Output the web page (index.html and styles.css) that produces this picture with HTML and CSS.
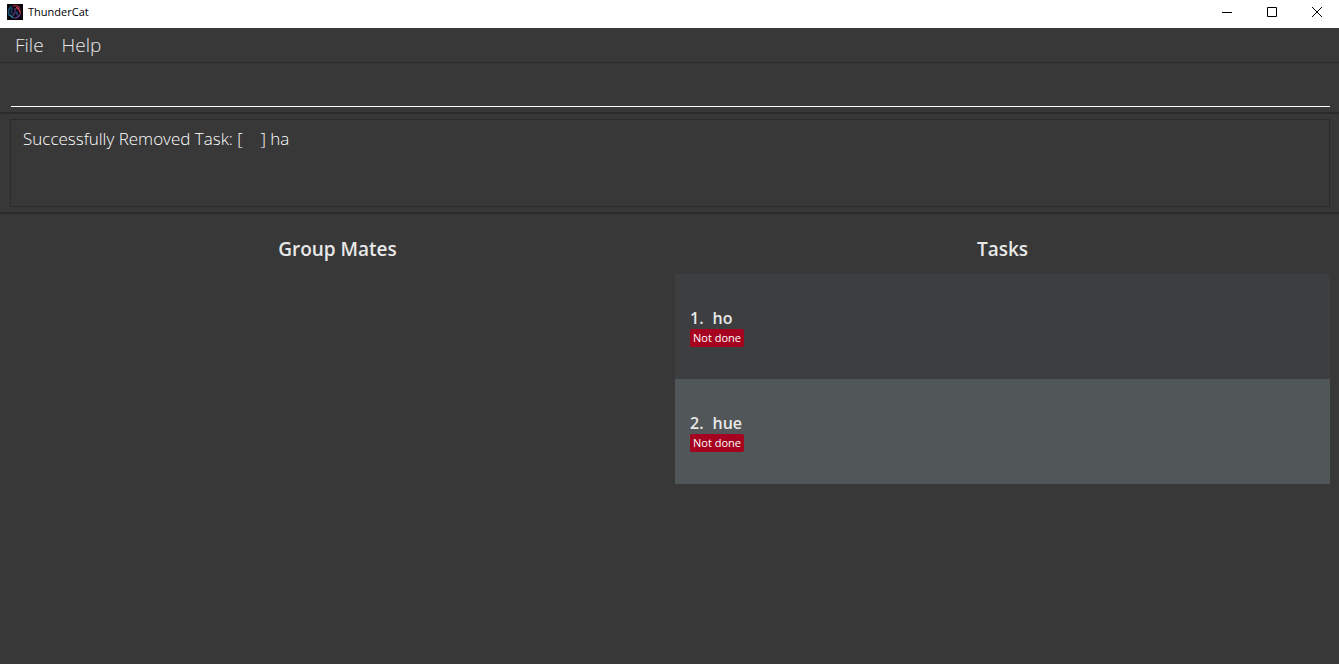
FILE: index.html
```html
<!DOCTYPE html>
<html lang="en">
<head>
<meta charset="utf-8">
<title>ThunderCat</title>
<link rel="stylesheet" href="styles.css">
</head>
<body>
<header class="titlebar">
  <svg class="logo" viewBox="0 0 16 16" width="16" height="16" aria-hidden="true">
    <rect width="16" height="16" fill="#08060c"/>
    <g fill="none">
      <path d="M4.500 2.500C1.500 5 1 8.500 2.500 11.500" stroke="#17506c" stroke-width="1.800"/>
      <path d="M5.500 4C4 6 4 8 5.500 10" stroke="#203d68" stroke-width="1.500"/>
      <path d="M2.500 11l4 3" stroke="#2392b8" stroke-width="1.300"/>
      <path d="M6 2C9 1 12 2 13 4.500" stroke="#842038" stroke-width="1.500"/>
      <path d="M9 3.500c2 .5 4 3 4.500 6" stroke="#c23b58" stroke-width="1.400"/>
      <path d="M8 4v5l-2.500 3" stroke="#4c3270" stroke-width="1.500"/>
      <path d="M13 10C12 13 9.500 14 7.500 14" stroke="#5d387f" stroke-width="1.600"/>
      <path d="M9.500 7.500l1 4" stroke="#2b4777" stroke-width="1.500"/>
    </g>
  </svg>
  <h1 class="app-name">ThunderCat</h1>
  <div class="window-controls">
    <button class="window-button" type="button" aria-label="Minimize"><svg viewBox="0 0 10 10" width="10" height="10"><path d="M0 5.500H10" stroke="#000" fill="none"/></svg></button>
    <button class="window-button" type="button" aria-label="Maximize"><svg viewBox="0 0 10 10" width="10" height="10"><path d="M.5 .5H9.500V9.500H.5Z" stroke="#000" fill="none"/></svg></button>
    <button class="window-button" type="button" aria-label="Close"><svg viewBox="0 0 10 10" width="10" height="10"><path d="M0 0L10 10M10 0L0 10" stroke="#000" fill="none"/></svg></button>
  </div>
</header>
<nav class="menubar" aria-label="Main menu">
  <button class="menu" type="button">File</button>
  <button class="menu" type="button">Help</button>
</nav>
<form class="command-pane">
  <input class="command" type="text" aria-label="Command" autocomplete="off">
</form>
<section class="result-pane" aria-label="Result">
  <output class="result">Successfully Removed Task: [    ] ha</output>
</section>
<main class="lists">
  <section class="column">
    <h2 class="heading">Group Mates</h2>
  </section>
  <section class="column">
    <h2 class="heading">Tasks</h2>
    <ol class="tasks">
      <li class="task">
        <div class="task-title"><span>1.</span><span>ho</span></div>
        <span class="status">Not done</span>
      </li>
      <li class="task">
        <div class="task-title"><span>2.</span><span>hue</span></div>
        <span class="status">Not done</span>
      </li>
    </ol>
  </section>
</main>
</body>
</html>
```
FILE: styles.css
```css
* {
  box-sizing: border-box;
}

body {
  margin: 0;
  min-height: 100vh;
  background: #383838;
  color: #e8e8e8;
  font-family: "Open Sans", sans-serif;
}

button {
  border: 0;
  padding: 0;
  background: none;
  color: inherit;
  font: inherit;
}

.titlebar {
  display: flex;
  align-items: center;
  height: 28px;
  padding: 0 0 4px 7px;
  background: #fff;
  color: #000;
}

.logo {
  margin-right: 5px;
}

.app-name {
  margin: 0;
  font: 400 11px/16px "Open Sans", sans-serif;
}

.window-controls {
  display: flex;
  margin-left: auto;
}

.window-button {
  display: flex;
  align-items: center;
  justify-content: center;
  width: 45px;
  height: 24px;
}

.menubar {
  display: flex;
  gap: 18px;
  height: 35px;
  padding: 0 15px;
  border-bottom: 1px solid #2b2b2b;
}

.menu {
  font-size: 19px;
  font-weight: 300;
  line-height: 34px;
}

.command-pane {
  padding: 5px 9px 5px 11px;
  border-bottom: 2px solid #2b2b2b;
}

.command {
  display: block;
  width: 100%;
  height: 39px;
  padding: 0;
  border: 0;
  border-bottom: 1px solid #fff;
  outline: 0;
  background: transparent;
  color: #fff;
  font: 300 17px "Open Sans", sans-serif;
}

.result-pane {
  padding: 5px 9px 5px 10px;
  border-bottom: 2px solid #2b2b2b;
}

.result {
  display: block;
  min-height: 88px;
  padding: 7px 12px;
  border: 1px solid #2b2b2b;
  color: #fff;
  font-size: 17px;
  font-weight: 300;
  line-height: 24px;
  white-space: pre-wrap;
}

.lists {
  display: grid;
  grid-template-columns: 1fr 1fr;
  gap: 10px;
  padding: 20px 9px 20px 10px;
}

.heading {
  margin: 0 0 10px;
  font-size: 19px;
  font-weight: 600;
  line-height: 30px;
  text-align: center;
}

.tasks {
  margin: 0;
  padding: 0;
  list-style: none;
}

.task {
  display: flex;
  flex-direction: column;
  align-items: flex-start;
  padding: 33px 15px 32px;
  background: #3c3e3f;
}

.task:nth-child(even) {
  background: #515658;
}

.task-title {
  display: flex;
  gap: 9px;
  font-size: 16px;
  font-weight: 600;
  line-height: 22px;
}

.status {
  padding: 1px 3px;
  border-radius: 2px;
  background: #a60321;
  color: #fff;
  font-size: 11px;
  line-height: 16px;
}
```
